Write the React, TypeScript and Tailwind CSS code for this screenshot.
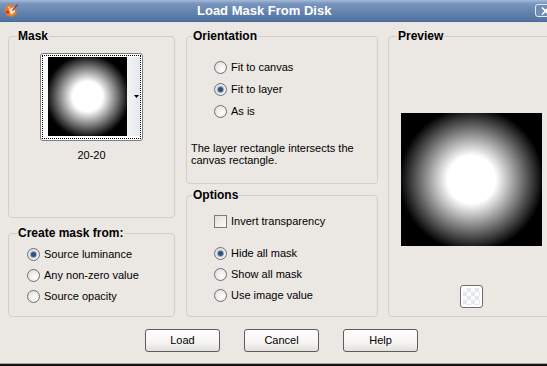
import type React from "react";

const FONT = { fontFamily: '"Liberation Sans", Arial, sans-serif' };

const Radio: React.FC<{ checked?: boolean }> = ({ checked }) => (
  <span className="w-[13px] h-[13px] shrink-0 rounded-full border border-[#6b6f76] bg-[radial-gradient(circle_at_65%_65%,#ffffff,#dddad4)] flex items-center justify-center">
    {checked && (
      <span className="w-[5px] h-[5px] rounded-full bg-[#34507a] shadow-[0_0_1px_1px_#8fa4c2]" />
    )}
  </span>
);

const RadioRow: React.FC<{ label: string; checked?: boolean; h: string }> = ({
  label,
  checked,
  h,
}) => (
  <div className={`flex items-center gap-[4px] ${h}`}>
    <Radio checked={checked} />
    <span className="text-[11px] leading-[13px] text-black">{label}</span>
  </div>
);

const Group: React.FC<{
  title: string;
  labelLeft: string;
  className: string;
  children: React.ReactNode;
}> = ({ title, labelLeft, className, children }) => (
  <div className={`relative rounded-[4px] border border-[#d3cfc8] ${className}`}>
    <span
      className={`absolute -top-[8px] ${labelLeft} bg-[#ebe7e3] px-[1px] text-[12px] leading-[14px] font-bold text-black`}
    >
      {title}
    </span>
    {children}
  </div>
);

const Button: React.FC<{ label: string }> = ({ label }) => (
  <button className="w-[75px] h-[23px] rounded-[3px] border border-[#5c5c5c] bg-[linear-gradient(#ffffff_0%,#f5f4f1_60%,#e2e0da_100%)] text-[11px] text-black">
    {label}
  </button>
);

const TitleIcon = () => (
  <svg width="16" height="16" viewBox="0 0 16 16" className="shrink-0">
    <path d="M2 9 C1 5 4 1 9 2 C13 3 15 7 13 11 C11 15 4 15 2 9 Z" fill="#e9782c" />
    <path d="M6 6 L11 4 L12 9 L8 12 Z" fill="#f6e3b9" />
    <circle cx="4.5" cy="9" r="1.6" fill="#c73a1c" />
    <circle cx="6" cy="4.5" r="1.2" fill="#f7c33a" />
    <path d="M9 7 L14 1 L15 2 L10 8 Z" fill="#5c4a8a" />
  </svg>
);

export default function App() {
  return (
    <div
      className="w-[547px] h-[366px] overflow-hidden bg-[#ebe7e3] flex flex-col text-black"
      style={FONT}
    >
      {/* Title bar */}
      <div className="h-[22px] shrink-0 flex items-center bg-[linear-gradient(#a6bad6_0%,#7795be_18%,#6383ae_60%,#5272a0_100%)] border-b border-[#4a6892]">
        <div className="ml-[3px]">
          <TitleIcon />
        </div>
        <span className="ml-[178px] text-[13px] font-bold text-white whitespace-nowrap">
          Load Mask From Disk
        </span>
        <span className="ml-auto -mr-[9px] w-[21px] h-[13px] shrink-0 rounded-[3px] border border-[#e4eaf2] bg-[#6f8cb4] flex items-center justify-center">
          <svg width="9" height="8" viewBox="0 0 9 8">
            <path d="M1 0.5 L8 7.5 M8 0.5 L1 7.5" stroke="#fff" strokeWidth="1.6" />
          </svg>
        </span>
      </div>

      {/* Body */}
      <div className="flex pt-[14px] pl-[8px]">
        {/* Left column */}
        <div className="w-[167px] shrink-0 flex flex-col gap-[15px]">
          <Group title="Mask" labelLeft="left-[8px]" className="h-[182px]">
            <div className="flex flex-col items-center pt-[16px]">
              <div className="w-[103px] h-[88px] rounded-[3px] border border-[#7d7d7d] bg-white p-[1px]">
                <div className="w-full h-full border border-dotted border-black flex pl-[5px] pt-[1px]">
                  <div className="w-[79px] h-[79px] bg-[radial-gradient(circle,#ffffff_0px,#ffffff_15px,#000000_42px)]" />
                  <div className="flex-1 h-[79px] bg-[linear-gradient(90deg,#f3f4f7,#e4e7ee)] flex items-center justify-end pr-[1px]">
                    <svg width="5" height="3" viewBox="0 0 5 3">
                      <path d="M0 0 H5 L2.5 3 Z" fill="#000" />
                    </svg>
                  </div>
                </div>
              </div>
              <span className="mt-[8px] text-[11px] leading-[13px]">20-20</span>
            </div>
          </Group>

          <Group title="Create mask from:" labelLeft="left-[8px]" className="h-[84px]">
            <div className="flex flex-col pt-[10px] pl-[18px]">
              <RadioRow label="Source luminance" checked h="h-[21px]" />
              <RadioRow label="Any non-zero value" h="h-[21px]" />
              <RadioRow label="Source opacity" h="h-[21px]" />
            </div>
          </Group>
        </div>

        {/* Middle column */}
        <div className="w-[192px] shrink-0 ml-[11px] flex flex-col gap-[11px]">
          <Group title="Orientation" labelLeft="left-[5px]" className="h-[148px]">
            <div className="flex flex-col pt-[19px] pl-[27px]">
              <RadioRow label="Fit to canvas" h="h-[22px]" />
              <RadioRow label="Fit to layer" checked h="h-[22px]" />
              <RadioRow label="As is" h="h-[22px]" />
            </div>
            <p className="mt-[20px] pl-[4px] text-[11px] leading-[12px]">
              The layer rectangle intersects the
              <br />
              canvas rectangle.
            </p>
          </Group>

          <Group title="Options" labelLeft="left-[5px]" className="h-[122px]">
            <div className="flex flex-col pt-[14px] pl-[27px]">
              <div className="flex items-center gap-[4px] h-[22px]">
                <span className="w-[13px] h-[13px] shrink-0 border border-[#7a7a7a] bg-[linear-gradient(135deg,#e0ded8,#fbfbfa)]" />
                <span className="text-[11px] leading-[13px]">Invert transparency</span>
              </div>
              <div className="mt-[11px] flex flex-col">
                <RadioRow label="Hide all mask" checked h="h-[21px]" />
                <RadioRow label="Show all mask" h="h-[21px]" />
                <RadioRow label="Use image value" h="h-[21px]" />
              </div>
            </div>
          </Group>
        </div>

        {/* Right column */}
        <div className="w-[167px] shrink-0 ml-[10px]">
          <Group title="Preview" labelLeft="left-[8px]" className="h-[281px]">
            <div className="flex flex-col items-center pt-[76px]">
              <div className="w-[141px] h-[133px] bg-[radial-gradient(circle,#ffffff_0px,#ffffff_24px,#000000_72px)]" />
              <div className="mt-[39px] w-[23px] h-[23px] rounded-[3px] border border-[#6e6e6e] bg-white p-[2px]">
                <div className="w-full h-full bg-[repeating-conic-gradient(#e3e6ec_0_25%,#fbfbfc_0_50%)] bg-[length:8px_8px]" />
              </div>
            </div>
          </Group>
        </div>
      </div>

      {/* Buttons */}
      <div className="mt-[12px] pl-[145px] flex gap-[24px]">
        <Button label="Load" />
        <Button label="Cancel" />
        <Button label="Help" />
      </div>

      <div className="mt-auto h-[3px] shrink-0 border-t border-[#a9a7a2] bg-[#111]" />
    </div>
  );
}
